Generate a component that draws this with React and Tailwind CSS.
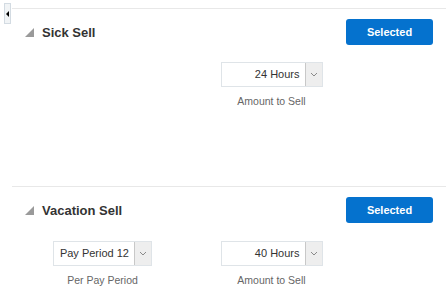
import React from "react";

function Chevron() {
  return (
    <svg width="8" height="5" viewBox="0 0 8 5" className="text-[#8a8a8a]">
      <polyline points="1,1 4,4 7,1" fill="none" stroke="currentColor" strokeWidth="1" />
    </svg>
  );
}

function Corner() {
  return (
    <svg width="9" height="9" viewBox="0 0 9 9" className="shrink-0">
      <polygon points="0,9 9,0 9,9" fill="#9a9a9a" />
    </svg>
  );
}

function Select({ value, label, width }) {
  return (
    <div className="flex flex-col items-center">
      <div className={`flex h-[25px] ${width} border border-[#dfe4e8] bg-white`}>
        <div className="flex-1 flex items-center justify-end pr-[5px] text-[11px] text-[#333]">
          {value}
        </div>
        <div className="w-[17px] flex items-center justify-center bg-[#eeeeee] border-l border-[#c8c8c8]">
          <Chevron />
        </div>
      </div>
      <div className="mt-[7px] text-[10.5px] text-[#666]">{label}</div>
    </div>
  );
}

function Section({ title, children, height }) {
  return (
    <section className={`border-t border-[#e8e8e8] ${height}`}>
      <div className="flex items-center justify-between pl-[13px] pr-[13px] pt-[10px]">
        <div className="flex items-center gap-[8px] pt-[1px]">
          <Corner />
          <span className="text-[13px] font-bold text-[#333]">{title}</span>
        </div>
        <button className="w-[87px] h-[26px] rounded-[3px] bg-[#0572ce] text-white text-[11px] font-bold">
          Selected
        </button>
      </div>
      {children}
    </section>
  );
}

export default function App() {
  return (
    <div
      className="relative w-[446px] h-[299px] bg-white overflow-hidden"
      style={{ fontFamily: '"Liberation Sans", Arial, sans-serif' }}
    >
      <div className="absolute left-[4px] top-[3px] w-[7px] h-[21px] bg-[#f1f4f6] border border-[#d3dbe2] flex items-center justify-center">
        <span className="w-0 h-0 border-y-[3px] border-y-transparent border-r-[3px] border-r-black" />
      </div>
      <div className="ml-[12px] pt-[8px]">
        <Section title="Sick Sell" height="h-[178px]">
          <div className="flex pl-[6px] pt-[17px]">
            <div className="w-[169px]" />
            <div className="w-[169px] flex justify-center">
              <Select value="24 Hours" label="Amount to Sell" width="w-[102px]" />
            </div>
          </div>
        </Section>
        <Section title="Vacation Sell" height="h-[120px]">
          <div className="flex pl-[6px] pt-[18px]">
            <div className="w-[169px] flex justify-center">
              <Select value="Pay Period 12" label="Per Pay Period" width="w-[99px]" />
            </div>
            <div className="w-[169px] flex justify-center">
              <Select value="40 Hours" label="Amount to Sell" width="w-[102px]" />
            </div>
          </div>
        </Section>
      </div>
    </div>
  );
}
